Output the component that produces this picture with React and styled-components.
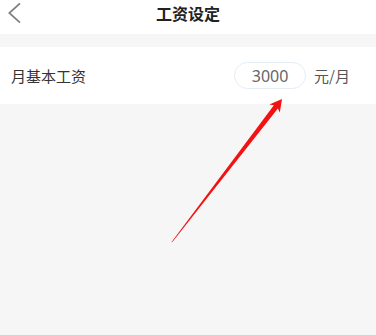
import React from "react";
import styled, { createGlobalStyle } from "styled-components";

const Global = createGlobalStyle`
  html, body { margin: 0; padding: 0; background: #f6f6f6; }
  body { font-family: "Noto Sans CJK SC", "Noto Sans", sans-serif; }
  #root { min-height: 335px; }
`;

const Page = styled.div`
  position: relative;
  width: 376px;
  height: 335px;
  background: #f6f6f6;
  display: flex;
  flex-direction: column;
  overflow: hidden;
`;

const Header = styled.header`
  height: 34px;
  background: #fff;
  display: grid;
  grid-template-columns: 40px 1fr 40px;
  align-items: start;
`;

const BackButton = styled.div`
  box-sizing: border-box;
  height: 34px;
  padding: 3px 0 0 8px;
  display: flex;
  align-items: flex-start;
  cursor: pointer;
`;

const Title = styled.h1`
  margin: 0;
  text-align: center;
  font-size: 16px;
  font-weight: 700;
  color: #222;
  line-height: 26px;
`;

const Section = styled.section`
  margin-top: 13px;
  background: #fff;
`;

const Row = styled.div`
  height: 57px;
  display: flex;
  align-items: center;
  padding: 0 26px 0 11px;
`;

const Label = styled.span`
  flex: 1;
  font-size: 15px;
  color: #333;
`;

const Pill = styled.input`
  box-sizing: border-box;
  width: 72px;
  height: 27px;
  border: 1px solid #e4edf3;
  border-radius: 14px;
  background: #fff;
  text-align: center;
  font-family: "Noto Sans", "Noto Sans CJK SC", sans-serif;
  font-size: 16px;
  color: #666;
  outline: none;
  padding: 0;
`;

const Unit = styled.span`
  margin-left: 8px;
  font-size: 15px;
  color: #555;
`;

const Overlay = styled.svg`
  position: absolute;
  left: 0;
  top: 0;
  pointer-events: none;
`;

export default function App() {
  return (
    <>
      <Global />
      <Page>
        <Header>
          <BackButton role="button" aria-label="返回">
            <svg width="14" height="22" viewBox="0 0 14 22" style={{ display: "block" }}>
              <path d="M12 0.3 L1.3 10 L12 19.7" fill="none" stroke="#808080" strokeWidth="1.7" />
            </svg>
          </BackButton>
          <Title>工资设定</Title>
          <span />
        </Header>
        <Section>
          <Row>
            <Label>月基本工资</Label>
            <Pill defaultValue="3000" />
            <Unit>元/月</Unit>
          </Row>
        </Section>
        <Overlay width="376" height="335" viewBox="0 0 376 335">
          <polygon
            points="171.2,242.6 172.8,241.4 277.9,108.6 279.8,112.6 282,99 269.4,104.5 273.9,105.2"
            fill="#f21212"
          />
        </Overlay>
      </Page>
    </>
  );
}
